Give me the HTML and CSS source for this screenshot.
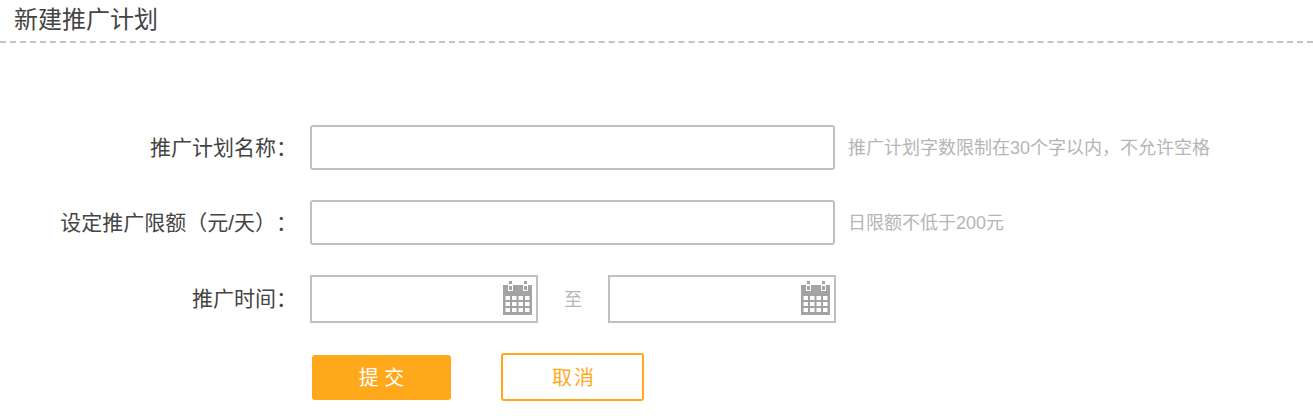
FILE: index.html
```html
<!DOCTYPE html>
<html lang="zh-CN">
<head>
    <meta charset="UTF-8">
    <title>新建推广计划</title>
    <link rel="stylesheet" href="styles.css">
</head>
<body>
    <h1 class="page-title">新建推广计划</h1>

    <form class="plan-form">
        <div class="form-row">
            <label class="form-label" for="planName">推广计划名称：</label>
            <input class="text-input" type="text" id="planName">
            <span class="hint">推广计划字数限制在30个字以内，不允许空格</span>
        </div>
        <div class="form-row">
            <label class="form-label" for="planLimit">设定推广限额（元/天）：</label>
            <input class="text-input" type="text" id="planLimit">
            <span class="hint">日限额不低于200元</span>
        </div>
        <div class="form-row form-row-date">
            <label class="form-label" for="startDate">推广时间：</label>
            <div class="date-box">
                <input class="date-input" type="text" id="startDate">
                <svg class="date-icon" viewBox="0 0 29 34" width="29" height="34">
                    <path fill="#a3a3a3" fill-rule="evenodd" d="M0 4h5v6h5V4h10v6h5V4h4v30H0zM2.500 15v4H7v-4zm6.500 0v4h4.500v-4zm6.500 0v4H20v-4zm6.500 0v4h4.500v-4zM2.500 21v4H7v-4zm6.500 0v4h4.500v-4zm6.500 0v4H20v-4zm6.500 0v4h4.500v-4zM2.500 27v4H7v-4zm6.500 0v4h4.500v-4zm6.500 0v4H20v-4zm6.500 0v4h4.500v-4z"/>
                    <path fill="#a3a3a3" d="M6 0h3v3H6zM21 0h3v3h-3zM6 5h3v4H6zM21 5h3v4h-3z"/>
                </svg>
            </div>
            <span class="date-sep">至</span>
            <div class="date-box">
                <input class="date-input" type="text" id="endDate">
                <svg class="date-icon" viewBox="0 0 29 34" width="29" height="34">
                    <path fill="#a3a3a3" fill-rule="evenodd" d="M0 4h5v6h5V4h10v6h5V4h4v30H0zM2.500 15v4H7v-4zm6.500 0v4h4.500v-4zm6.500 0v4H20v-4zm6.500 0v4h4.500v-4zM2.500 21v4H7v-4zm6.500 0v4h4.500v-4zm6.500 0v4H20v-4zm6.500 0v4h4.500v-4zM2.500 27v4H7v-4zm6.500 0v4h4.500v-4zm6.500 0v4H20v-4zm6.500 0v4h4.500v-4z"/>
                    <path fill="#a3a3a3" d="M6 0h3v3H6zM21 0h3v3h-3zM6 5h3v4H6zM21 5h3v4h-3z"/>
                </svg>
            </div>
        </div>
        <div class="form-actions">
            <button class="btn btn-submit" type="button">提 交</button>
            <button class="btn btn-cancel" type="button">取消</button>
        </div>
    </form>
</body>
</html>
```

FILE: styles.css
```css
body {
    margin: 0;
    font-family: "Liberation Sans", "Noto Sans CJK SC", sans-serif;
    background-color: #fff;
    color: #444;
    text-spacing-trim: space-all;
}
.page-title {
    margin: 0;
    height: 41px;
    padding-left: 14px;
    font-size: 24px;
    font-weight: normal;
    line-height: 39px;
    border-bottom: 2px dashed #c4c4c4;
}
.plan-form {
    padding-top: 82px;
}
.form-row {
    display: flex;
    align-items: center;
    height: 45px;
    margin-bottom: 30px;
}
.form-row-date {
    height: 48px;
    margin-bottom: 32px;
}
.form-label {
    flex: none;
    width: 297px;
    margin-right: 13px;
    padding-bottom: 4px;
    font-size: 21px;
    text-align: right;
    white-space: nowrap;
}
.text-input {
    width: 525px;
    height: 45px;
    padding: 0 10px;
    border: 2px solid #c0c0c0;
    border-radius: 3px;
    box-sizing: border-box;
}
.hint {
    margin-left: 13px;
    padding-bottom: 4px;
    font-size: 18px;
    color: #b5b5b5;
}
.date-box {
    display: flex;
    align-items: center;
    width: 228px;
    height: 48px;
    padding: 0 4px 2px 0;
    border: 2px solid #c0c0c0;
    box-sizing: border-box;
}
.date-input {
    flex: 1;
    min-width: 0;
    border: none;
    outline: none;
}
.date-icon {
    flex: none;
}
.date-sep {
    width: 70px;
    padding-bottom: 2px;
    font-size: 18px;
    color: #b5b5b5;
    text-align: center;
}
.form-actions {
    display: flex;
    align-items: center;
    margin-top: -2px;
    padding-left: 312px;
}
.btn {
    padding-bottom: 2px;
    font-family: inherit;
    font-size: 20px;
    box-sizing: border-box;
    border-radius: 3px;
    cursor: pointer;
}
.btn-submit {
    width: 139px;
    height: 45px;
    margin-right: 50px;
    border: none;
    background-color: #ffa81c;
    color: #fff;
}
.btn-cancel {
    width: 143px;
    height: 48px;
    padding-left: 9px;
    border: 2px solid #ffa81c;
    background-color: #fff;
    color: #ffa81c;
    letter-spacing: 2px;
}
```
